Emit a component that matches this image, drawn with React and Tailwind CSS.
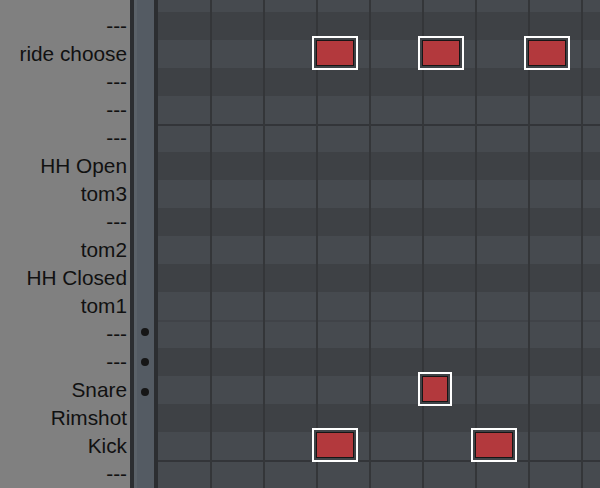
const rows = [
    { label: '---', shade: 'light' },
    { label: '---', shade: 'dark' },
    { label: 'ride choose', shade: 'light' },
    { label: '---', shade: 'dark' },
    { label: '---', shade: 'light' },
    { label: '---', shade: 'light', line: 'octave' },
    { label: 'HH Open', shade: 'dark' },
    { label: 'tom3', shade: 'light' },
    { label: '---', shade: 'dark' },
    { label: 'tom2', shade: 'light' },
    { label: 'HH Closed', shade: 'dark' },
    { label: 'tom1', shade: 'light' },
    { label: '---', shade: 'light', line: 'faint', dot: 'up' },
    { label: '---', shade: 'dark', dot: 'mid' },
    { label: 'Snare', shade: 'light', dot: 'down' },
    { label: 'Rimshot', shade: 'dark' },
    { label: 'Kick', shade: 'light' },
    { label: '---', shade: 'light', line: 'octave' },
];

// inner note rects, relative to the grid's top-left corner
const notes = [
    { x: 158, y: 40, w: 38 },
    { x: 264, y: 40, w: 38 },
    { x: 370, y: 40, w: 38 },
    { x: 264, y: 376, w: 26 },
    { x: 158, y: 432, w: 38 },
    { x: 317, y: 432, w: 38 },
];

const dotShift = {
    up: '-translate-y-[2px]',
    mid: '',
    down: 'translate-y-[2px]',
};

const rowClass = (row) => {
    let cls = 'h-7 ' + (row.shade === 'light' ? 'bg-[#464a4f]' : 'bg-[#3e4145]');
    if (row.line === 'octave') cls += ' border-t-2 border-[#333539]';
    if (row.line === 'faint') cls += ' border-t-2 border-[#404348]';
    return cls;
};

const Note = ({ x, y, w }) => (
    <div
        className="absolute border-2 border-white bg-[#404347] p-[2px]"
        style={{ left: x - 4, top: y - 4 }}
    >
        <div className="h-[26px] border border-[#161616] bg-[#b3393d]" style={{ width: w }} />
    </div>
);

export default function App() {
    return (
        <div className="flex h-[488px] w-[600px] overflow-hidden bg-[#3e4145] font-['Liberation_Sans',Arial,sans-serif]">
            {/* labels */}
            <div className="w-[130px] shrink-0 bg-[#808080]">
                <div className="-mt-4 flex flex-col">
                    {rows.map((row, i) => (
                        <div key={i} className="h-7 pr-[3px] text-right text-[20.8px] leading-7 text-[#111111] whitespace-nowrap">
                            {row.label}
                        </div>
                    ))}
                </div>
            </div>

            <div className="w-1 shrink-0 bg-[#2c2e31]" />

            {/* marker column */}
            <div className="w-5 shrink-0 border-l-[3px] border-[#5b6269] bg-[#545b63]">
                <div className="-mt-4 flex flex-col">
                    {rows.map((row, i) => (
                        <div key={i} className="-ml-[2px] flex h-7 items-center justify-center">
                            {row.dot && <div className={`size-2 rounded-full bg-[#161616] ${dotShift[row.dot]}`} />}
                        </div>
                    ))}
                </div>
            </div>

            <div className="w-1 shrink-0 bg-[#2c2e31]" />

            {/* grid */}
            <div className="relative flex-1">
                <div className="-mt-4 flex flex-col">
                    {rows.map((row, i) => (
                        <div key={i} className={rowClass(row)} />
                    ))}
                </div>

                <div className="pointer-events-none absolute inset-0 flex">
                    <div className="w-[52px] shrink-0" />
                    {Array.from({ length: 8 }).map((_, i) => (
                        <div key={i} className="w-[53px] shrink-0 border-l-2 border-[#343639]" />
                    ))}
                </div>

                {notes.map((n, i) => (
                    <Note key={i} {...n} />
                ))}
            </div>
        </div>
    );
}
